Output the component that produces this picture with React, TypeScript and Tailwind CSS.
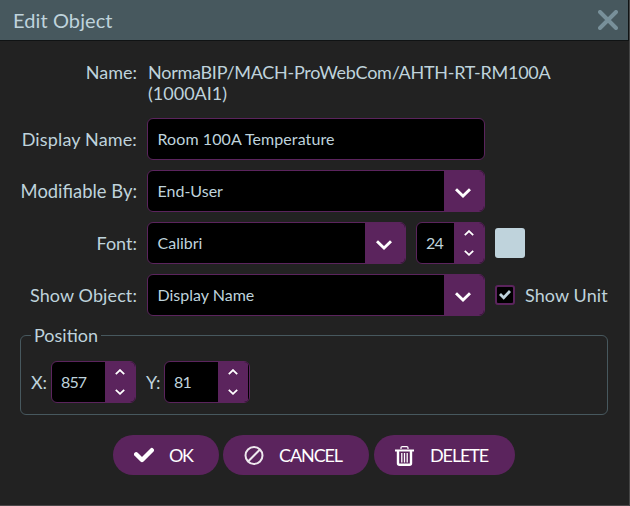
import type { ReactNode } from "react";

function Chevron({ className = "", up = false, w = 2.6 }: { className?: string; up?: boolean; w?: number }) {
  return (
    <svg className={className} viewBox="0 0 16 10" fill="none" stroke="white" strokeWidth={w}>
      <path d={up ? "M1 8.5 8 1.8 15 8.5" : "M1 1.3 8 8 15 1.3"} />
    </svg>
  );
}

function Label({ children, className = "" }: { children: ReactNode; className?: string }) {
  return <div className={"w-[137px] shrink-0 text-right whitespace-nowrap " + className}>{children}</div>;
}

function Select({ children, className }: { children: ReactNode; className: string }) {
  return (
    <div className={"flex h-[42px] shrink-0 overflow-hidden rounded-md border border-[#5b245d] bg-black " + className}>
      <div className="flex flex-1 items-center pl-[9.5px] text-base whitespace-nowrap">{children}</div>
      <div className="flex w-10 items-center justify-center bg-[#5b245d] pt-[3px]">
        <Chevron className="h-[10px] w-4 -translate-x-px" w={2.9} />
      </div>
    </div>
  );
}

function Spinner({ value, className, narrow = false }: { value: string; className: string; narrow?: boolean }) {
  return (
    <div className={"flex h-[42px] shrink-0 overflow-hidden rounded-md border border-[#5b245d] bg-black " + className}>
      <div className="flex flex-1 items-center pl-[9px] text-base tracking-[-0.9px]">{value}</div>
      <div className={"flex flex-col items-center justify-between bg-[#5b245d] pt-[7px] pb-[7px] " + (narrow ? "mr-px w-[30px]" : "w-[30px]")}>
        <Chevron className="h-[6px] w-[10px]" up w={3} />
        <Chevron className="h-[6px] w-[10px]" w={3} />
      </div>
    </div>
  );
}

function Action({ children, icon, className }: { children: ReactNode; icon: ReactNode; className: string }) {
  return (
    <button className={"flex h-10 shrink-0 items-center rounded-full bg-[#5b245d] pl-[21px] text-lg whitespace-nowrap text-white " + className}>
      <span className="mr-[15px] flex w-5 shrink-0 justify-center">{icon}</span>
      {children}
    </button>
  );
}

export default function App() {
  return (
    <div className="flex h-[506px] w-[630px] flex-col border-r border-b border-r-[#454545] border-b-[#4b4749] bg-[#222222] font-['Lato',sans-serif] text-lg text-[#bfd3dc]">
      <header className="flex h-[41px] shrink-0 items-center justify-between border-r border-b border-[#101314] bg-[#47585e] pr-[10px] pl-[13px]">
        <h1 className="text-xl tracking-[0.1px]">Edit Object</h1>
        <svg className="h-5 w-5" viewBox="0 0 20 20" stroke="#78909a" strokeWidth="4" strokeLinecap="round">
          <path d="m2 2 16 16M18 2 2 18" />
        </svg>
      </header>
      <div className="mt-[21px] flex gap-[11px] leading-[21px]">
        <Label>Name:</Label>
        <div className="whitespace-nowrap">
          <div><span className="tracking-[-0.26px]">NormaBIP/MACH-ProWebCom/AHTH-RT-RM100A</span></div>
          <div><span>(1000AI1)</span></div>
        </div>
      </div>
      <div className="mt-[14px] flex flex-col gap-[10px]">
        <div className="flex items-center gap-[10px]">
          <Label className="tracking-[0.15px]">Display Name:</Label>
          <div className="flex h-[42px] w-[338px] items-center rounded-md border border-[#5b245d] bg-black pl-[9.5px] text-base">
            <span className="tracking-[0.08px]">Room 100A Temperature</span>
          </div>
        </div>
        <div className="flex items-center gap-[10px]">
          <Label className="text-[18.4px]">Modifiable By:</Label>
          <Select className="w-[338px]"><span>End-User</span></Select>
        </div>
        <div className="flex items-center gap-[10px]">
          <Label>Font:</Label>
          <Select className="w-[259px]"><span>Calibri</span></Select>
          <Spinner value="24" className="w-[69px]" />
          <div className="h-[30px] w-[30px] rounded-[3px] bg-[#bfd3dc]" />
        </div>
        <div className="flex items-center gap-[10px]">
          <Label className="tracking-[0.1px]">Show Object:</Label>
          <Select className="w-[338px]"><span>Display Name</span></Select>
          <div className="flex h-5 w-5 shrink-0 items-center justify-center rounded-[3px] border-2 border-[#5b245d] bg-black">
            <svg className="h-3 w-3" viewBox="0 0 12 12" fill="none" stroke="#bfd3dc" strokeWidth="2.8">
              <path d="m1 5 3.7 3.7L11 2" />
            </svg>
          </div>
          <span className="tracking-[0.1px] whitespace-nowrap">Show Unit</span>
        </div>
      </div>
      <fieldset className="mt-[9px] ml-5 h-[90px] w-[588px] shrink-0 rounded-md border border-[#47585e] pl-[10px]">
        <legend className="px-[3px] leading-[21px]"><span>Position</span></legend>
        <div className="mt-[15px] flex items-center">
          <span className="w-[20px] tracking-[-0.3px]">X:</span>
          <Spinner value="857" className="w-[85px]" />
          <span className="ml-[10px] w-[18px] tracking-[-0.6px]">Y:</span>
          <Spinner value="81" className="w-[86px]" narrow />
        </div>
      </fieldset>
      <div className="mt-5 ml-[113px] flex">
        <Action className="w-[106px]" icon={
          <svg className="h-5 w-5" viewBox="0 0 20 20" fill="none" stroke="white" strokeWidth="4.4">
            <path d="m2.2 9.3 5.8 5.7L17.8 5.2" strokeLinejoin="round" strokeLinecap="round" />
          </svg>
        }><span className="tracking-[-1.3px]">OK</span></Action>
        <Action className="ml-1 w-[146px]" icon={
          <svg className="h-5 w-5" viewBox="0 0 20 20" fill="none" stroke="#eee8ee" strokeWidth="2">
            <circle cx="10" cy="10.5" r="8.5" /><path d="m4.3 16.3 11.4-11.6" />
          </svg>
        }><span className="tracking-[-1.1px]">CANCEL</span></Action>
        <Action className="ml-[5px] w-[141px]" icon={
          <svg className="h-[21px] w-5" viewBox="0 0 20 21" fill="none" stroke="white">
            <path d="M6 4V2.8Q6 1.6 7.2 1.6h4.6Q13 1.6 13 2.8V4" strokeWidth="1.2" />
            <path d="M0 5.5h19" strokeWidth="2" />
            <path d="M3 6v12.3q0 1.5 1.5 1.5h10q1.5 0 1.5-1.5V6" strokeWidth="2.4" />
            <path d="M6.8 8V17.5M9.5 8V17.5M12.2 8V17.5" strokeWidth="1.3" />
          </svg>
        }><span className="tracking-[-1.1px]">DELETE</span></Action>
      </div>
    </div>
  );
}
